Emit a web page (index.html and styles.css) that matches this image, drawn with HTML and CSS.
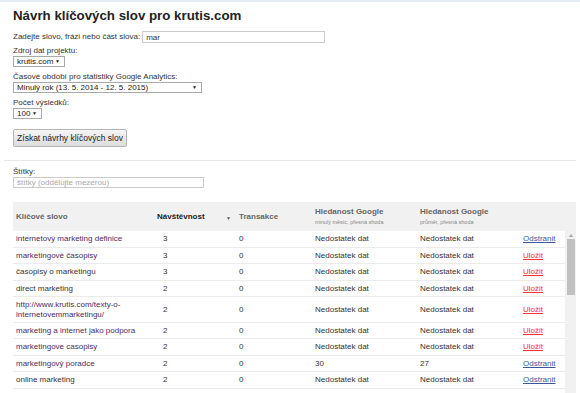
FILE: index.html
```html
<!DOCTYPE html>
<html lang="cs">
<head>
  <meta charset="UTF-8" />
  <meta name="viewport" content="width=device-width, initial-scale=1.0">
  <title>Návrh klíčových slov</title>
  <link rel="stylesheet" href="styles.css">
</head>
<body>
  <div class="topline"></div>

  <div class="page">
    <h1>Návrh klíčových slov pro krutis.com</h1>

    <div class="form">
      <div class="field inline">
        <label for="keyword">Zadejte slovo, frázi nebo část slova:</label>
        <input id="keyword" type="text" value="mar" />
      </div>

      <div class="field">
        <label for="project">Zdroj dat projektu:</label>
        <span class="select sel-project"><select id="project"><option>krutis.com</option></select></span>
      </div>

      <div class="field">
        <label for="period">Časové období pro statistiky Google Analytics:</label>
        <span class="select sel-period"><select id="period"><option>Minulý rok (13. 5. 2014 - 12. 5. 2015)</option></select></span>
      </div>

      <div class="field">
        <label for="count">Počet výsledků:</label>
        <span class="select sel-count"><select id="count"><option>100</option></select></span>
      </div>

      <button class="btn">Získat návrhy klíčových slov</button>
    </div>
  </div>

  <div class="sep"></div>

  <div class="page">
    <div class="field tags">
      <label for="tags">Štítky:</label>
      <input id="tags" type="text" placeholder="štítky (oddělujte mezerou)" />
    </div>

    <div class="table">
      <div class="thead">
        <div class="th">Klíčové slovo</div>
        <div class="th th-sorted">Návštěvnost <span class="sort">▼</span></div>
        <div class="th">Transakce</div>
        <div class="th th-two">Hledanost Google<small>minulý měsíc, přesná shoda</small></div>
        <div class="th th-two">Hledanost Google<small>průměr, přesná shoda</small></div>
        <div class="th"></div>
      </div>

      <div class="tbody">
        <div class="rows">
          <div class="tr">
            <div class="td kw visited">internetový marketing definice</div>
            <div class="td num">3</div><div class="td">0</div>
            <div class="td">Nedostatek dat</div><div class="td">Nedostatek dat</div>
            <div class="td"><a class="remove" href="#">Odstranit</a></div>
          </div>
          <div class="tr">
            <div class="td kw visited">marketingové časopisy</div>
            <div class="td num">3</div><div class="td">0</div>
            <div class="td">Nedostatek dat</div><div class="td">Nedostatek dat</div>
            <div class="td"><a class="save" href="#">Uložit</a></div>
          </div>
          <div class="tr">
            <div class="td kw">časopisy o marketingu</div>
            <div class="td num">3</div><div class="td">0</div>
            <div class="td">Nedostatek dat</div><div class="td">Nedostatek dat</div>
            <div class="td"><a class="save" href="#">Uložit</a></div>
          </div>
          <div class="tr">
            <div class="td kw">direct marketing</div>
            <div class="td num">2</div><div class="td">0</div>
            <div class="td">Nedostatek dat</div><div class="td">Nedostatek dat</div>
            <div class="td"><a class="save" href="#">Uložit</a></div>
          </div>
          <div class="tr">
            <div class="td kw visited">http://www.krutis.com/texty-o-internetovemmarketingu/</div>
            <div class="td num">2</div><div class="td">0</div>
            <div class="td">Nedostatek dat</div><div class="td">Nedostatek dat</div>
            <div class="td"><a class="save" href="#">Uložit</a></div>
          </div>
          <div class="tr">
            <div class="td kw visited">marketing a internet jako podpora</div>
            <div class="td num">2</div><div class="td">0</div>
            <div class="td">Nedostatek dat</div><div class="td">Nedostatek dat</div>
            <div class="td"><a class="save" href="#">Uložit</a></div>
          </div>
          <div class="tr">
            <div class="td kw visited">marketingove casopisy</div>
            <div class="td num">2</div><div class="td">0</div>
            <div class="td">Nedostatek dat</div><div class="td">Nedostatek dat</div>
            <div class="td"><a class="save" href="#">Uložit</a></div>
          </div>
          <div class="tr">
            <div class="td kw visited">marketingový poradce</div>
            <div class="td num">2</div><div class="td">0</div>
            <div class="td">30</div><div class="td">27</div>
            <div class="td"><a class="remove" href="#">Odstranit</a></div>
          </div>
          <div class="tr">
            <div class="td kw">online marketing</div>
            <div class="td num">2</div><div class="td">0</div>
            <div class="td">Nedostatek dat</div><div class="td">Nedostatek dat</div>
            <div class="td"><a class="remove" href="#">Odstranit</a></div>
          </div>
          <div class="tr">
            <div class="td kw">internet marketing</div>
            <div class="td num">2</div><div class="td">0</div>
            <div class="td">Nedostatek dat</div><div class="td">Nedostatek dat</div>
            <div class="td"><a class="save" href="#">Uložit</a></div>
          </div>
        </div>

        <div class="scrollbar">
          <span class="scroll-up"></span>
          <span class="scroll-thumb"></span>
        </div>
      </div>
    </div>
  </div>
</body>
</html>
```

FILE: styles.css
```css
body {
  font-family: "Liberation Sans", Arial, sans-serif;
  font-size: 8px;
  color: #333;
  background: #fff;
  margin: 0;
  padding: 0;
  height: 393px;
  overflow: hidden;
}

.topline {
  height: 2px;
  background: #e3ebf6;
}

.page {
  padding: 0 4px 0 13px;
}

h1 {
  font-size: 13.3px;
  line-height: 15px;
  font-weight: bold;
  color: #222;
  margin: 6px 0 8px;
}

.field {
  display: flex;
  flex-direction: column;
  align-items: flex-start;
  margin-bottom: 3px;
}

.field > label {
  padding-top: 2px;
}

.field.inline {
  flex-direction: row;
  align-items: center;
  gap: 2px;
  margin-bottom: 1px;
}

.field.inline > label {
  padding-top: 0;
}

label {
  line-height: 10px;
  color: #333;
}

input[type="text"] {
  font-family: inherit;
  font-size: 8px;
  height: 12px;
  box-sizing: border-box;
  border: 1px solid #ccc;
  padding: 0 3px;
  color: #333;
  outline: none;
}

#keyword {
  width: 183px;
}

.select {
  position: relative;
  display: inline-block;
}

.select select {
  appearance: none;
  -webkit-appearance: none;
  font-family: inherit;
  font-size: 8px;
  color: #222;
  height: 11px;
  box-sizing: border-box;
  border: 1px solid #a9a9a9;
  border-radius: 0;
  background: #fff;
  padding: 0 0 0 3px;
  line-height: 9px;
  display: block;
}

.select::after {
  content: "▼";
  position: absolute;
  right: 5px;
  top: 3px;
  font-size: 5px;
  line-height: 5px;
  color: #222;
  pointer-events: none;
}

.sel-project select { width: 52px; }
.sel-period select { width: 189px; }
.sel-count select { width: 29px; }

.btn {
  font-family: inherit;
  font-size: 8.5px;
  color: #222;
  height: 18px;
  width: 114px;
  margin-top: 10px;
  padding: 0;
  border: 1px solid #b5b5b5;
  border-radius: 2px;
  background: linear-gradient(#f5f5f5, #dcdcdc);
  display: block;
}

.sep {
  height: 1px;
  background: #e8e8e8;
  margin: 13px 4px 4px 4px;
}

.tags {
  margin-bottom: 0;
}

.tags input {
  width: 191px;
  height: 11px;
}

.tags input::placeholder {
  color: #aaa;
}

.table {
  margin-top: 14px;
}

.thead,
.tr {
  display: grid;
  grid-template-columns: 141px 82px 76px 105px 103px 1fr;
}

.thead {
  background: #f1f1f1;
  height: 29px;
  align-items: center;
}

.th {
  font-weight: bold;
  color: #666;
  padding-left: 3px;
  line-height: 10px;
}

.th-sorted {
  color: #222;
  position: relative;
}

.sort {
  position: absolute;
  right: 5px;
  top: 1px;
  font-size: 5px;
  color: #555;
}

.th small {
  display: block;
  font-weight: normal;
  font-size: 5.5px;
  line-height: 8px;
  color: #888;
  margin-top: 1px;
}

.th-two {
  margin-top: -1px;
}

.tbody {
  display: flex;
  height: 163px;
  overflow: hidden;
}

.rows {
  flex: 1;
}

.scrollbar {
  width: 11px;
  background: #f1f1f1;
  display: flex;
  flex-direction: column;
  align-items: center;
  padding-top: 3px;
  gap: 2px;
}

.scroll-up {
  width: 0;
  height: 0;
  border-left: 2.5px solid transparent;
  border-right: 2.5px solid transparent;
  border-bottom: 3px solid #a3a3a3;
}

.scroll-thumb {
  width: 8px;
  height: 56px;
  background: #c1c1c1;
}

.tr {
  border-bottom: 1px solid #ebebeb;
  align-items: center;
}

.td {
  padding: 3px 3px 2.5px;
  line-height: 10px;
  color: #333;
}

.td.num {
  padding-left: 9px;
}

.kw {
  line-height: 9.5px;
}

.kw.visited {
  color: #4d2c62;
}

.td a {
  text-decoration: underline;
}

.remove {
  color: #3b5998;
}

.save {
  color: #ff3333;
}
```
